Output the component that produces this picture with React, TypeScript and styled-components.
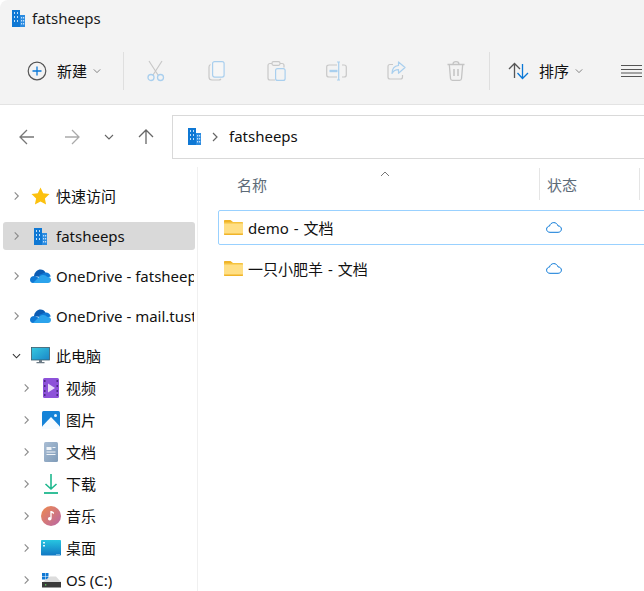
import React from "react";
import styled, { createGlobalStyle } from "styled-components";

const Global = createGlobalStyle`
  html, body { margin: 0; padding: 0; background: #fff; overflow: hidden; }
  body { font-family: "Noto Sans", "Open Sans", "Noto Sans CJK SC", sans-serif; font-size: 15px; color: #111; }
  * { box-sizing: border-box; }
`;

const Window = styled.div`
  width: 644px; height: 591px; overflow: hidden; display: flex; flex-direction: column;
  background: #fff; border-top-left-radius: 8px;
`;
const Ribbon = styled.header`
  height: 105px; flex: none; background: #f3f3f3; border-bottom: 1px solid #e3e3e3;
  display: flex; flex-direction: column;
`;
const TitleBar = styled.div`
  height: 36px; padding-left: 12px; display: flex; align-items: center; gap: 7px; flex: none;
  font-size: 15px; color: #1a1a1a;
`;
const Toolbar = styled.div`
  display: flex; align-items: center; height: 39px; margin-top: 15px; padding-left: 27px; flex: none;
`;
const Labeled = styled.div<{ $w: number }>`
  width: ${p => p.$w}px; flex: none; display: flex; align-items: center; gap: 10px; font-size: 15px; line-height: 18px;
`;
const Caret = styled.span`
  display: inline-flex; margin-left: -4px;
`;
const Sep = styled.div<{ $m?: string }>`
  width: 1px; height: 38px; background: #dfdfdf; flex: none; margin: ${p => p.$m || "0"};
`;
const ToolSlot = styled.div`
  width: 60px; flex: none; display: flex; justify-content: center; align-items: center;
`;
const NavRow = styled.div`
  height: 60px; flex: none; display: flex; align-items: center; background: #fff; padding: 3px 0 0 19px;
`;
const NavBtn = styled.div<{ $w: number }>`
  width: ${p => p.$w}px; flex: none; display: flex; align-items: center;
`;
const Address = styled.div`
  flex: 1; height: 44px; margin-right: -4px; border: 1px solid #d9d9d9;
  display: flex; align-items: center; padding-left: 15px; font-size: 15px; gap: 9px;
`;
const AddressText = styled.span`
  line-height: 18px; margin-top: -2px;
`;
const Body = styled.div`
  flex: 1; display: flex; min-height: 0; padding-top: 2px;
`;
const Sidebar = styled.nav`
  width: 198px; flex: none; border-right: 1px solid #f0f0f0; padding-top: 9px; overflow: hidden;
`;
const TopRow = styled.div`
  height: 40px; display: flex; align-items: center; position: relative; padding: 0 3px 0 12px; white-space: nowrap;
`;
const Highlight = styled.div`
  height: 28px; width: 192px; margin-left: -9px; padding-left: 9px; background: #d9d9d9; border-radius: 3px;
  display: flex; align-items: center; flex: none;
`;
const SubList = styled.div`
  margin-top: -4px;
`;
const SubRow = styled.div`
  height: 32px; display: flex; align-items: center; padding-left: 22px; white-space: nowrap;
`;
const Twist = styled.span`
  width: 9px; display: inline-flex; justify-content: center; flex: none;
`;
const IconCell = styled.span`
  width: 22px; margin-left: 8px; display: inline-flex; justify-content: center; flex: none;
`;
const SubIconCell = styled(IconCell)`
  margin-left: 9px;
`;
const Label = styled.span`
  margin-left: 5px; overflow: hidden; font-size: 15px; line-height: 20px; flex: 1; min-width: 0;
`;
const SubLabel = styled(Label)`
  margin-left: 4px;
`;
const Main = styled.main`
  flex: 1; min-width: 0; padding: 1px 0 0 20px; overflow: hidden;
`;
const Header = styled.div`
  height: 38px; width: 450px; display: grid; grid-template-columns: 322px 100px 1fr; align-items: start; position: relative;
  color: #5d6b78; font-size: 15px;
`;
const HeadCell = styled.div<{ $pad: number; $line?: boolean }>`
  height: 32px; display: flex; align-items: center; padding-left: ${p => p.$pad}px;
  border-right: ${p => (p.$line ? "1px solid #e5e5e5" : "none")};
`;
const SortCaret = styled.span`
  position: absolute; left: 162px; top: 1px; display: inline-flex;
`;
const FileRow = styled.div<{ $sel?: boolean }>`
  height: ${p => (p.$sel ? "35px" : "34px")}; margin-top: ${p => (p.$sel ? "4px" : "6px")}; width: 440px; display: grid; grid-template-columns: 321px 1fr; align-items: center;
  border: 1px solid ${p => (p.$sel ? "#99d1ff" : "transparent")}; border-radius: 2px;
`;
const FileName = styled.div`
  display: flex; align-items: center; gap: 5px; padding-left: 5px; font-size: 15px; word-spacing: 1px;
`;
const CloudCell = styled.div`
  padding-left: 6px; display: flex; align-items: center;
`;

const Chevron = ({ dir = "right", size = 12, color = "#8a8a8a", sw = 1.2 }: { dir?: "right" | "down" | "up"; size?: number; color?: string; sw?: number }) => (
  <svg width={size} height={size} viewBox="0 0 10 10" fill="none" stroke={color} strokeWidth={sw}>
    {dir === "right" && <path d="M3 1l4 4-4 4" />}
    {dir === "down" && <path d="M1 3l4 4 4-4" />}
    {dir === "up" && <path d="M1 7l4-4 4 4" />}
  </svg>
);
const Building = () => (
  <svg width="13" height="17" viewBox="0 0 13 17">
    <path d="M0 0h8v17H0z" fill="#0f78d4" />
    <path d="M8 5h5v12H8z" fill="#2b8be0" />
    <g fill="#bfe0fb">
      <path d="M2 2h1v2H2zM5 2h1v2H5zM2 6h1v2H2zM5 6h1v2H5zM2 10h1v2H2zM5 10h1v2H5zM9 7h1.200v1.500H9zM11 7h1.200v1.500H11zM9 10h1.200v1.500H9zM11 10h1.200v1.500H11zM9 13h1.200v1.500H9zM11 13h1.200v1.500H11z" />
    </g>
  </svg>
);
const PlusCircle = () => (
  <svg width="20" height="20" viewBox="0 0 20 20" fill="none">
    <circle cx="10" cy="10" r="8.800" stroke="#555" strokeWidth="1.200" />
    <path d="M10 5.500v9M5.500 10h9" stroke="#0a78d7" strokeWidth="1.300" />
  </svg>
);
const Scissors = () => (
  <svg width="20" height="22" viewBox="0 0 20 22" fill="none">
    <path d="M3 1l9 14M16 1L7 15" stroke="#c8c8c8" strokeWidth="1.200" />
    <circle cx="5" cy="17.500" r="3" stroke="#a9cfee" strokeWidth="1.300" />
    <circle cx="14.500" cy="17.500" r="3" stroke="#a9cfee" strokeWidth="1.300" />
  </svg>
);
const Copy = () => (
  <svg width="17" height="20" viewBox="0 0 17 20" fill="none">
    <path d="M2.500 3.500C1.500 4 1 4.500 1 6v10c0 2 1 3 3 3h7c1 0 1.500-.5 2-1" stroke="#c8c8c8" strokeWidth="1.200" />
    <rect x="4.600" y="0.600" width="11.500" height="15.500" rx="2" fill="#f6f6f6" stroke="#a9cfee" strokeWidth="1.200" />
  </svg>
);
const Paste = () => (
  <svg width="19" height="20" viewBox="0 0 19 20" fill="none">
    <path d="M5 2.500H3C1.800 2.500 1 3.300 1 4.500v12.500c0 1.200.8 2 2 2h5M13 2.500h2c1.200 0 2 .8 2 2v2" stroke="#c8c8c8" strokeWidth="1.200" />
    <rect x="5" y="0.700" width="8" height="3.600" rx="1.500" stroke="#c8c8c8" strokeWidth="1.200" />
    <rect x="8.600" y="7.600" width="9.500" height="11.800" rx="2" stroke="#a9cfee" strokeWidth="1.200" />
  </svg>
);
const Rename = () => (
  <svg width="21" height="20" viewBox="0 0 21 20" fill="none">
    <path d="M11 4H3C1.500 4 .7 4.800 .7 6v8c0 1.200.8 2 2.300 2h8M16 4h2c1.500 0 2.300.8 2.300 2v8c0 1.200-.8 2-2.300 2h-2" stroke="#c8c8c8" strokeWidth="1.200" />
    <path d="M3.500 10h8" stroke="#a9cfee" strokeWidth="2.400" />
    <path d="M11 1h3M14 19h-3M12.700 1v18" stroke="#a9cfee" strokeWidth="1.200" />
  </svg>
);
const Share = () => (
  <svg width="19" height="19" viewBox="0 0 19 19" fill="none">
    <path d="M6 3.500H3C1.700 3.500 1 4.300 1 5.500v10.500c0 1.300.7 2 2 2h10.500c1.300 0 2-.7 2-2v-2" stroke="#c8c8c8" strokeWidth="1.200" />
    <path d="M11.500 1v3.500C7.500 5 5 8 5 12.500c1.500-2.800 3.500-3.800 6.500-3.800v3.600L18 6.500z" stroke="#a9cfee" strokeWidth="1.200" strokeLinejoin="round" />
  </svg>
);
const Trash = () => (
  <svg width="18" height="20" viewBox="0 0 18 20" fill="none" stroke="#c4c4c4" strokeWidth="1.300">
    <path d="M.5 3.500h17M6 3.500c0-2 1-2.800 3-2.800s3 .8 3 2.800M2.300 3.500l1.200 14c.1 1 .8 1.800 1.900 1.800h7.200c1.100 0 1.800-.8 1.900-1.800l1.200-14" />
    <path d="M7 8v7M11 8v7" strokeWidth="1.500" />
  </svg>
);
const SortIcon = () => (
  <svg width="21" height="18" viewBox="0 0 21 18" fill="none" strokeWidth="1.300">
    <path d="M6.500 16V1.500M1 7l5.500-5.500L12 7" stroke="#555" />
    <path d="M14.500 2v14.500M9.500 11l5 5.500 5.500-5.500" stroke="#0a78d7" />
  </svg>
);
const ListIcon = () => (
  <svg width="21" height="14" viewBox="0 0 21 14" stroke="#555" strokeWidth="1.100">
    <path d="M0 1.500h21M0 5.500h21M0 9h21M0 12.500h21" />
  </svg>
);
const Arrow = ({ dir, color }: { dir: "left" | "right" | "up"; color: string }) => {
  const d = dir === "left" ? "M15 8H1M8 1L1 8l7 7" : dir === "right" ? "M1 8h14M8 1l7 7-7 7" : "M8 15V1M1 8l7-7 7 7";
  return (
    <svg width="16" height="16" viewBox="0 0 16 16" fill="none" stroke={color} strokeWidth="1.300"><path d={d} /></svg>
  );
};
const Star = () => (
  <svg width="19" height="18" viewBox="0 0 19 18"><path d="M9.500 .5l2.700 5.800 6.300.8-4.600 4.300 1.200 6.200-5.600-3.100-5.600 3.100 1.200-6.200L.5 7.100l6.300-.8z" fill="#fcc10f" /></svg>
);
const OneDriveIcon = () => (
  <svg width="21" height="14" viewBox="0 0 21 14">
    <path d="M4 7C4.500 3 7.500 .5 10.500 .5c2.300 0 4 1 5 3L10 8z" fill="#0a5cb4" />
    <path d="M15 3.500c2.500-.5 5 .8 5.700 4L12 10 9 6z" fill="#1078d4" />
    <path d="M3 14C1 14 0 12.500 0 10.800 0 8.700 1.800 7 4.200 7c1.500 0 3 .5 4 2l5 5z" fill="#0f78d4" />
    <path d="M3 14l6-6c1-1.500 3-2 4.500-2 1.500 0 2.600.7 3.500 1.800 2.200 0 4 1 4 3.200 0 2-1.500 3-3 3z" fill="#2ba3ec" />
  </svg>
);
const Monitor = () => (
  <svg width="19" height="18" viewBox="0 0 19 18">
    <defs><linearGradient id="mon" x1="0" y1="0" x2="1" y2="1"><stop offset="0" stopColor="#36c9e0" /><stop offset="1" stopColor="#1a86c8" /></linearGradient></defs>
    <rect x="0.500" y="0.500" width="18" height="12.500" fill="url(#mon)" stroke="#3a5a6a" strokeWidth="0.800" />
    <path d="M8 13h3v2H8zM5.500 15h8v1.300h-8z" fill="#6b7a85" />
  </svg>
);
const Video = () => (
  <svg width="16" height="20" viewBox="0 0 16 20">
    <rect width="16" height="20" rx="1.500" fill="#8d52d9" />
    <path d="M5 5.500v9l7-4.500z" fill="#e8dcf8" />
    <g fill="#4a2a80"><rect x="1" y="2" width="1.500" height="2" /><rect x="1" y="7" width="1.500" height="2" /><rect x="1" y="12" width="1.500" height="2" /><rect x="13.500" y="2" width="1.500" height="2" /><rect x="13.500" y="7" width="1.500" height="2" /><rect x="13.500" y="12" width="1.500" height="2" /><rect x="1" y="16" width="1.500" height="2" /><rect x="13.500" y="16" width="1.500" height="2" /></g>
  </svg>
);
const Picture = () => (
  <svg width="18" height="18" viewBox="0 0 18 18">
    <rect width="18" height="18" rx="1.500" fill="#1583d8" />
    <path d="M0 15.500L9 6l9 9.500V18H0z" fill="#f5fbff" />
    <circle cx="13.500" cy="4.500" r="1.500" fill="#eaf6ff" />
  </svg>
);
const Doc = () => (
  <svg width="14" height="20" viewBox="0 0 14 20">
    <defs><linearGradient id="doc" x1="0" y1="0" x2="1" y2="1"><stop offset="0" stopColor="#a9bdd4" /><stop offset="1" stopColor="#7f9bb8" /></linearGradient></defs>
    <rect width="14" height="20" rx="1.500" fill="url(#doc)" />
    <path d="M2.500 5h5v3h-5zM8.500 5h3v1h-3zM2.500 9.500h9v1h-9zM2.500 12h9v1h-9z" fill="#f0f4f8" />
  </svg>
);
const Download = () => (
  <svg width="14" height="20" viewBox="0 0 14 20" fill="none" stroke="#1fb88e" strokeWidth="1.600">
    <path d="M7 0v15M1.500 10L7 15l5.500-5" />
    <path d="M0 19h14" strokeWidth="1.800" />
  </svg>
);
const Music = () => (
  <svg width="20" height="20" viewBox="0 0 20 20">
    <defs><linearGradient id="mus" x1="0" y1="0" x2="1" y2="1"><stop offset="0" stopColor="#ef8a4c" /><stop offset="1" stopColor="#b866a8" /></linearGradient></defs>
    <circle cx="10" cy="10" r="10" fill="url(#mus)" />
    <path d="M10 5v7.500" stroke="#fff" strokeWidth="1.300" />
    <circle cx="8.700" cy="12.700" r="1.800" fill="#fff" />
    <path d="M10 5c1 .3 2.500.7 3 1.800v1.400c-1-1-2-1.300-3-1.500z" fill="#fff" />
  </svg>
);
const Desktop = () => (
  <svg width="20" height="16" viewBox="0 0 20 16">
    <defs><linearGradient id="dsk" x1="0" y1="0" x2="0" y2="1"><stop offset="0" stopColor="#27c5e0" /><stop offset="1" stopColor="#1178c4" /></linearGradient></defs>
    <rect width="20" height="15.500" rx="0.800" fill="url(#dsk)" />
    <path d="M2 2h2v1.500H2zM2 5h2v1.500H2z" fill="#dff6fb" />
    <path d="M15.500 14h1v1h-1zM17.500 14h1v1h-1z" fill="#cfeef7" />
  </svg>
);
const Drive = () => (
  <svg width="20" height="15" viewBox="0 0 20 15">
    <path d="M1 0h3v3H1zM4.500 0h3v3h-3zM1 3.500h3v3H1zM4.500 3.500h3v3h-3z" fill="#0f78d4" />
    <path d="M9 3.500h6l5 5.500H2z" fill="#dcdcdc" />
    <rect x="1" y="9" width="19" height="5.500" fill="#3a3a3a" />
    <rect x="4" y="11.200" width="1.300" height="1.300" fill="#5fd35f" />
  </svg>
);
const Folder = () => (
  <svg width="19" height="15" viewBox="0 0 19 15">
    <path d="M0 1c0-.6.4-1 1-1h5.500L9 2H0z" fill="#f0b429" />
    <path d="M0 2h18c.6 0 1 .4 1 1v1H0z" fill="#f5c33f" />
    <path d="M0 3.500h19V14c0 .6-.4 1-1 1H1c-.6 0-1-.4-1-1z" fill="#ffdf85" />
    <path d="M0 13.500h19V14c0 .6-.4 1-1 1H1c-.6 0-1-.4-1-1z" fill="#f0b429" />
  </svg>
);
const Cloud = () => (
  <svg width="16" height="11" viewBox="0 0 16 11" fill="none" stroke="#0a78d7" strokeWidth="1">
    <path d="M4 10.300C2 10.300 .6 9 .6 7.200c0-1.700 1.200-3 2.900-3.100C4 2 5.700.6 7.800.6c2 0 3.600 1.300 4.200 3.300 1.900 0 3.400 1.400 3.400 3.200 0 1.800-1.400 3.200-3.300 3.200z" />
  </svg>
);

const subItems: [React.ReactNode, string][] = [
  [<Video />, "视频"],
  [<Picture />, "图片"],
  [<Doc />, "文档"],
  [<Download />, "下载"],
  [<Music />, "音乐"],
  [<Desktop />, "桌面"],
  [<Drive />, "OS (C:)"],
];

export default function App() {
  return (
    <Window>
      <Global />
      <Ribbon>
        <TitleBar><Building />fatsheeps</TitleBar>
        <Toolbar>
          <Labeled $w={96}><PlusCircle />新建<Caret><Chevron dir="down" size={8} color="#666" sw={1} /></Caret></Labeled>
          <Sep $m="0 2px 0 0" />
          <ToolSlot><Scissors /></ToolSlot>
          <ToolSlot><Copy /></ToolSlot>
          <ToolSlot><Paste /></ToolSlot>
          <ToolSlot><Rename /></ToolSlot>
          <ToolSlot><Share /></ToolSlot>
          <ToolSlot><Trash /></ToolSlot>
          <Sep $m="0 18px 0 3px" />
          <Labeled $w={113}><SortIcon />排序<Caret><Chevron dir="down" size={8} color="#666" sw={1} /></Caret></Labeled>
          <ListIcon />
        </Toolbar>
      </Ribbon>
      <NavRow>
        <NavBtn $w={45}><Arrow dir="left" color="#777" /></NavBtn>
        <NavBtn $w={40}><Arrow dir="right" color="#aaa" /></NavBtn>
        <NavBtn $w={34}><Chevron dir="down" size={10} color="#666" sw={1.100} /></NavBtn>
        <NavBtn $w={34}><Arrow dir="up" color="#666" /></NavBtn>
        <Address><Building /><Chevron size={10} color="#666" /><AddressText>fatsheeps</AddressText></Address>
      </NavRow>
      <Body>
        <Sidebar>
          <TopRow><Twist><Chevron /></Twist><IconCell><Star /></IconCell><Label>快速访问</Label></TopRow>
          <TopRow>
            <Highlight><Twist><Chevron /></Twist><IconCell><Building /></IconCell><Label>fatsheeps</Label></Highlight>
          </TopRow>
          <TopRow><Twist><Chevron /></Twist><IconCell><OneDriveIcon /></IconCell><Label>OneDrive - fatsheeps</Label></TopRow>
          <TopRow><Twist><Chevron /></Twist><IconCell><OneDriveIcon /></IconCell><Label>OneDrive - mail.tust</Label></TopRow>
          <TopRow><Twist><Chevron dir="down" color="#333" /></Twist><IconCell><Monitor /></IconCell><Label>此电脑</Label></TopRow>
          <SubList>
            {subItems.map(([icon, label]) => (
              <SubRow key={label}><Twist><Chevron /></Twist><SubIconCell>{icon}</SubIconCell><SubLabel>{label}</SubLabel></SubRow>
            ))}
          </SubList>
        </Sidebar>
        <Main>
          <Header>
            <HeadCell $pad={19} $line>名称</HeadCell>
            <HeadCell $pad={7} $line>状态</HeadCell>
            <SortCaret><Chevron dir="up" size={10} color="#777" sw={1} /></SortCaret>
          </Header>
          <FileRow $sel>
            <FileName><Folder />demo - 文档</FileName>
            <CloudCell><Cloud /></CloudCell>
          </FileRow>
          <FileRow>
            <FileName><Folder />一只小肥羊 - 文档</FileName>
            <CloudCell><Cloud /></CloudCell>
          </FileRow>
        </Main>
      </Body>
    </Window>
  );
}
